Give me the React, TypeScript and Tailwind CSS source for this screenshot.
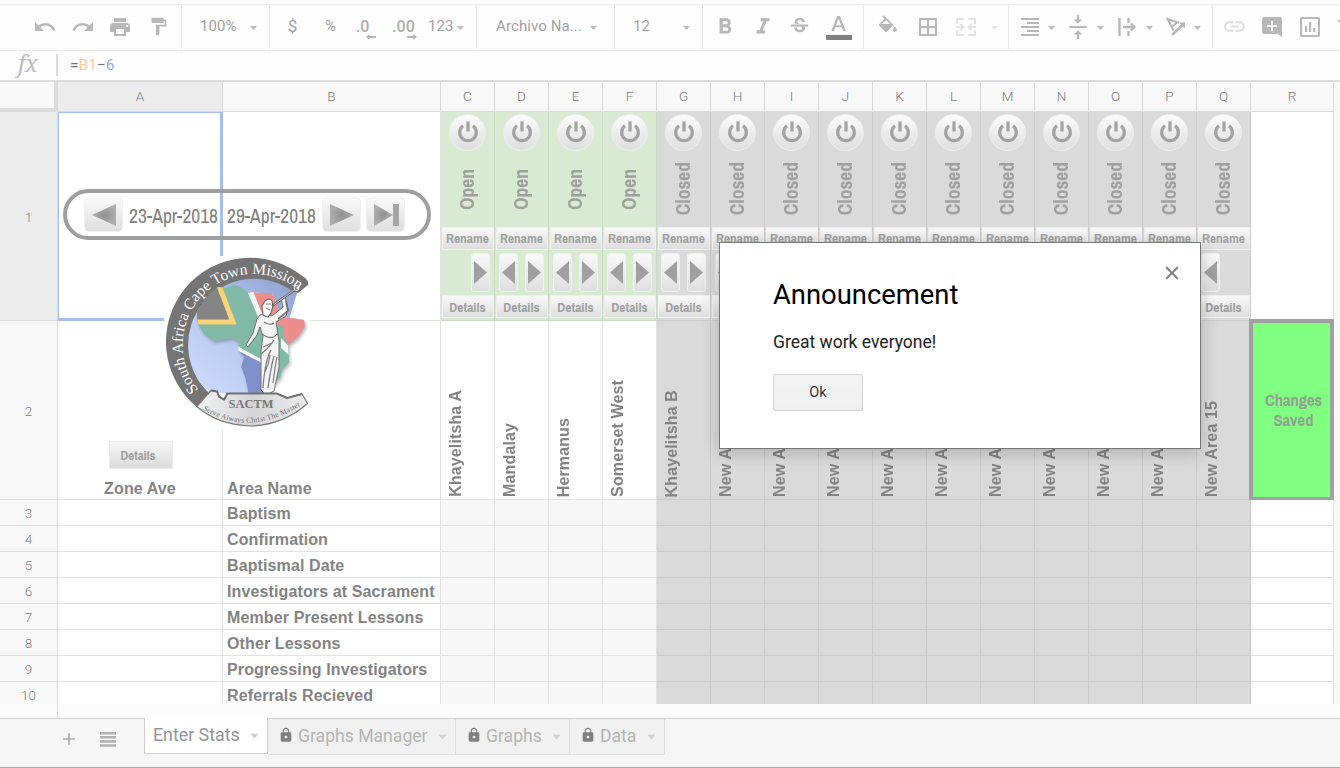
import React from "react";
import {
  MdUndo, MdRedo, MdPrint, MdFormatPaint, MdFormatBold, MdFormatItalic, MdStrikethroughS,
  MdBorderAll, MdFormatAlignRight, MdVerticalAlignCenter, MdLink, MdLock, MdAdd, MdClose,
} from "react-icons/md";

const narrow = "font-['Liberation_Sans_Narrow','Archivo_Narrow','Liberation_Sans',sans-serif]";

const Caret = ({ className = "" }: { className?: string }) => (
  <svg width="7" height="4" viewBox="0 0 7 4" className={`shrink-0 ${className}`}>
    <path d="M0 0h7L3.500 4z" fill="currentColor" />
  </svg>
);

const Slot = ({ className, children }: { className: string; children?: React.ReactNode }) => (
  <div className={`flex h-full shrink-0 items-center justify-center ${className}`}>{children}</div>
);

const Choice = ({ className, text }: { className: string; text: string }) => (
  <div className={`flex h-full shrink-0 items-center justify-between ${className}`}>
    <span>{text}</span>
    <Caret className="mt-[3px] text-[#bcbcbc]" />
  </div>
);

const Divider = () => <div className="h-[44px] w-px shrink-0 self-start bg-[#e8e8e8]" />;

function Decimal({ text, right }: { text: string; right?: boolean }) {
  return (
    <div className="relative text-[16px] font-medium leading-none text-[#adadad]">
      {text}
      <svg width="10" height="6" viewBox="0 0 10 6" className={`absolute top-[15px] ${right ? "-right-[2px] -scale-x-100" : "-right-[7px]"}`}>
        <path d="M0 3l3.500-3v2.100H10v1.800H3.500V6z" fill="#b5b5b5" />
      </svg>
    </div>
  );
}

function Toolbar() {
  return (
    <div className="flex h-[47px] items-center overflow-hidden border-y border-[#ebebeb] bg-[#fefefe] pl-[26px] pb-[2px] text-[15px] tracking-[0.1px] text-[#a2a2a2]">
      <Slot className="w-[38px]"><MdUndo size={24} color="#b8b8b8" /></Slot>
      <Slot className="w-[38px]"><MdRedo size={24} color="#b8b8b8" /></Slot>
      <Slot className="w-[37px] pr-px"><MdPrint size={24} color="#b8b8b8" /></Slot>
      <Slot className="w-[42px] pr-[3px]"><MdFormatPaint size={21} color="#b8b8b8" /></Slot>
      <Divider />
      <Choice className="w-[87px] pl-[18px] pr-[12px]" text="100%" />
      <Divider />
      <Slot className="w-[43px] pl-[2px] text-[17px]">$</Slot>
      <Slot className="w-[32px] pl-[3px]">%</Slot>
      <Slot className="w-[38px] pr-[3px]"><Decimal text=".0" /></Slot>
      <Slot className="w-[38px] pl-[3px]"><Decimal text=".00" right /></Slot>
      <Choice className="w-[55px] pl-[7px] pr-[12px]" text="123" />
      <Divider />
      <Choice className="w-[137px] pl-[19px] pr-[17px]" text="Archivo Na..." />
      <Divider />
      <Choice className="w-[87px] pl-[18px] pr-[12px]" text="12" />
      <Divider />
      <Slot className="w-[41px] pl-[3px]"><MdFormatBold size={26} color="#b8b8b8" /></Slot>
      <Slot className="w-[37px]"><MdFormatItalic size={26} color="#b8b8b8" /></Slot>
      <Slot className="w-[37px]"><MdStrikethroughS size={23} color="#b8b8b8" /></Slot>
      <Slot className="w-[45px] pr-[3px]">
        <svg width="26" height="28" viewBox="0 0 26 28">
          <path d="M11.200 3h2.800l5.800 15h-2.700l-1.300-3.700H9.300L8 18H5.300zM12.600 5.800l-2.500 6.400h5z" fill="#b8b8b8" />
          <rect y="22" width="26" height="5" fill="#808080" />
        </svg>
      </Slot>
      <Divider />
      <Slot className="w-[44px] pb-[6px] pl-[3px]">
        <svg width="18" height="17" viewBox="3 0 18 17">
          <path fillRule="evenodd" d="M16.560 8.940L7.620 0 6.210 1.410l2.380 2.380-5.150 5.150a1.490 1.490 0 0 0 0 2.120l5.500 5.500a1.490 1.490 0 0 0 2.120 0l5.500-5.500a1.490 1.490 0 0 0 0-2.120zM5.500 9L10 5.210 14.500 9zM19 11.500s-2 2.170-2 3.500a2 2 0 0 0 4 0c0-1.330-2-3.500-2-3.500z" fill="#b8b8b8" />
        </svg>
      </Slot>
      <Slot className="w-[40px]"><MdBorderAll size={24} color="#b8b8b8" /></Slot>
      <Slot className="w-[37px] pr-[2px]">
        <svg width="20" height="18" viewBox="0 0 20 18" fill="none" stroke="#e2e2e2" strokeWidth="2">
          <path d="M1 6V1h7M12 1h7v5M1 12v5h7M12 17h7v-5M0 9h7M4.500 6l3 3-3 3M20 9h-7M15.500 6l-3 3 3 3" />
        </svg>
      </Slot>
      <Slot className="w-[23px] pr-[4px]"><Caret className="mt-[3px] text-[#e6e6e6]" /></Slot>
      <Divider />
      <Slot className="w-[38px] pl-[4px]"><MdFormatAlignRight size={24} color="#b8b8b8" /></Slot>
      <Slot className="w-[8px]"><Caret className="mt-[3px] text-[#bcbcbc]" /></Slot>
      <Slot className="w-[41px] pl-[5px]"><MdVerticalAlignCenter size={26} color="#b8b8b8" /></Slot>
      <Slot className="w-[8px]"><Caret className="mt-[3px] text-[#bcbcbc]" /></Slot>
      <Slot className="w-[41px] pl-[5px]">
        <svg width="18" height="18" viewBox="0 0 18 18" fill="none" stroke="#b8b8b8" strokeWidth="2.400">
          <path d="M1.500 0v18M10.500 0v5M10.500 13v5M5 9h11M13 5.500L16.500 9 13 12.500" />
        </svg>
      </Slot>
      <Slot className="w-[8px]"><Caret className="mt-[3px] text-[#bcbcbc]" /></Slot>
      <Slot className="w-[40px] pl-[5px]">
        <svg width="20" height="19" viewBox="0 0 20 19" fill="none" stroke="#b8b8b8" strokeWidth="2">
          <path d="M7.500 13.500L1.500 2 13 5.800M5 10.500L11 5.500" />
          <path d="M6 18L17 7.500" strokeWidth="2.600" />
          <path d="M13 5.500h6v6z" fill="#b8b8b8" stroke="none" />
        </svg>
      </Slot>
      <Slot className="w-[8px]"><Caret className="mt-[3px] text-[#bcbcbc]" /></Slot>
      <div className="grow" />
      <Divider />
      <Slot className="w-[42px]"><MdLink size={25} color="#dfdfdf" /></Slot>
      <Slot className="w-[34px]">
        <svg width="20" height="20" viewBox="0 0 20 20">
          <path fillRule="evenodd" d="M2 0h16a2 2 0 0 1 2 2v18l-4-3H2a2 2 0 0 1-2-2V2a2 2 0 0 1 2-2zM9 4v4H5v2h4v4h2v-4h4V8h-4V4z" fill="#b8b8b8" />
        </svg>
      </Slot>
      <Slot className="w-[42px]">
        <svg width="20" height="20" viewBox="0 0 20 20">
          <rect x="1" y="1" width="18" height="18" rx="1" fill="none" stroke="#b8b8b8" strokeWidth="2.200" />
          <path d="M5 9h2.200v6H5zM9 5h2.200v10H9zM13 11h2.200v4H13z" fill="#b8b8b8" />
        </svg>
      </Slot>
      <Slot className="w-[9px] justify-end">
        <svg width="2" height="16" viewBox="0 0 2 16"><path d="M0 1h2v3L0 2z" fill="#b8b8b8" /></svg>
      </Slot>
    </div>
  );
}

const letters = "CDEFGHIJKLMNOPQ".split("");
const names = ["Khayelitsha A", "Mandalay", "Hermanus", "Somerset West", "Khayelitsha B",
  ...Array.from({ length: 10 }, (_, i) => `New Area ${i + 6}`)];
const dataRows = ["Baptism", "Confirmation", "Baptismal Date", "Investigators at Sacrament",
  "Member Present Lessons", "Other Lessons", "Progressing Investigators", "Referrals Recieved"];

const shine = "border border-[#f0f0f0] bg-linear-to-b from-[#f9f9f9] to-[#dfdfdf]";

const Tri = ({ left }: { left?: boolean }) => (
  <svg width="13" height="23" viewBox="0 0 13 23" className={left ? "-scale-x-100" : ""}>
    <path d="M0 0l13 11.500L0 23z" fill="#a0a0a0" />
  </svg>
);

function ControlCell({ i }: { i: number }) {
  const open = i < 4;
  return (
    <div className={`flex h-[209px] w-[54px] shrink-0 flex-col items-center border-b border-r pt-[2px] ${open ? "border-[#c9d9c4] bg-[#d9ead3]" : "border-[#cbcbcb] bg-[#dadada]"}`}>
      <div className="flex size-[37px] shrink-0 items-center justify-center rounded-full border border-[#eeeeee] bg-linear-to-b from-[#fcfcfc] to-[#dedede] pb-px">
        <svg width="22" height="24" viewBox="0 0 22 24" fill="none" stroke="#a2a2a2" strokeWidth="3.200">
          <path d="M6 5.800a8.300 8.300 0 1 0 10 0" />
          <path d="M11 1.500v10" />
        </svg>
      </div>
      <div className="flex h-[76px] shrink-0 items-center justify-center pl-px">
        <div className={`rotate-180 text-[19.500px] font-bold leading-none text-[#9f9f9f] [writing-mode:vertical-rl] ${narrow}`}>{open ? "Open" : "Closed"}</div>
      </div>
      <div className={`flex h-[23px] w-[52px] shrink-0 items-center justify-center text-[13.500px] font-bold text-[#a0a0a0] ${narrow} ${shine}`}>Rename</div>
      <div className="flex h-[45px] w-full shrink-0 items-center justify-between px-[4px]">
        {i > 0 ? <div className={`flex h-[39px] w-[19px] items-center justify-center rounded-[3px] ${shine}`}><Tri left /></div> : <span />}
        {i < 14 ? <div className={`flex h-[39px] w-[19px] items-center justify-center rounded-[3px] ${shine}`}><Tri /></div> : <span />}
      </div>
      <div className={`flex h-[23px] w-[52px] shrink-0 items-center justify-center pt-px text-[13.500px] font-bold text-[#a0a0a0] ${narrow} ${shine}`}>Details</div>
    </div>
  );
}

function Logo() {
  return (
    <svg width="147" height="174" viewBox="164 256 147 174" className="block bg-white">
      <defs>
        <linearGradient id="sky" x1="1" y1="0" x2="0.200" y2="1">
          <stop offset="0" stopColor="#8b9fd0" /><stop offset="0.500" stopColor="#b3c5ea" /><stop offset="1" stopColor="#cbdafa" />
        </linearGradient>
        <linearGradient id="plate" x1="0" y1="0" x2="1" y2="0">
          <stop offset="0" stopColor="#f3f3f3" /><stop offset="0.500" stopColor="#d5d5d5" /><stop offset="1" stopColor="#ececec" />
        </linearGradient>
        <filter id="soft" x="-20%" y="-20%" width="150%" height="150%"><feGaussianBlur stdDeviation="1.500" /></filter>
        <clipPath id="africa"><path d="M196.700 311.700L205 300l4-5 9-8 8 1 8-3 8 3 5 5 6-1 8 1 11 0 3 6 3 9 7 9 19 3 1 6-7 11-10 8 1 17-7 8-2 7-13 15-8 4-10 0-4-19-4-10 3-10-6-7 1-8-7-4-18 3-10-7-6-10z" /></clipPath>
        <path id="arcTop" d="M199.100 390.400A71 71 0 0 1 301.500 292.500" />
        <path id="arcLow" d="M200 408Q251 440 306 402" />
      </defs>
      <path d="M210 393A66 66 0 0 1 297 293L286 330L272 393z" fill="url(#sky)" />
      <path d="M197 407A84 84 0 0 1 303 276.500Q309 280 308 285L298 293L293 291.500A66 66 0 0 0 209 393z" fill="#747474" />
      <path transform="translate(1.500 2.500)" filter="url(#soft)" opacity="0.450" fill="#667" d="M196.700 311.700L205 300l4-5 9-8 8 1 8-3 8 3 5 5 6-1 8 1 11 0 3 6 3 9 7 9 19 3 1 6-7 11-10 8 1 17-7 8-2 7-13 15-8 4-10 0-4-19-4-10 3-10-6-7 1-8-7-4-18 3-10-7-6-10z" />
      <g clipPath="url(#africa)">
        <path d="M190 280h120v120H190z" fill="#80b9a5" />
        <path d="M190 284h28l12 38H190z" fill="#858585" />
        <path d="M216 278l17 44h-42" fill="none" stroke="#fad478" strokeWidth="5" />
        <path d="M246 288l19 46 30 0 16-30V280z" fill="#f7f8f7" />
        <path d="M251 286l16 40 16 10 14 20 18-20V280z" fill="#ed8e8e" />
        <path d="M284 325l0 20 14 14-8 20h-24v-50z" fill="#80b9a5" />
        <path d="M281 338l13 14-3 5-10-9z" fill="#f7f8f7" />
        <path d="M234 344l32 18 4 40h-44z" fill="#f7f8f7" />
        <path d="M235 349l27 14 5 40h-38z" fill="#7f90cd" />
      </g>
      <path d="M260 315L257 319l-4 14-7 12 2 2 9-12 3-8 3 9-2 15 0 39 5 5 8-4 5-24 0-26-3-19 10-6 2-7-3-12-4 1 2 9-11 9-5-2z" fill="#f4f4f4" stroke="#707070" strokeWidth="1" />
      <path d="M262 334q10 7 15 0M261 354q8-6 13-14M263 388q2-28 8-38M268 388q3-22 6-32M273 383q2-16 4-26M264 322q6 4 10 1M265 372q4-8 5-17M263 347l9-4" fill="none" stroke="#7a7a7a" strokeWidth="1.200" />
      <path d="M286 301l2 10-10 8" fill="none" stroke="#747474" strokeWidth="1.800" />
      <path d="M265 301q4-4 7 0l1 5-2 7-3 4-5-2-1-9z" fill="#fafafa" stroke="#6f6f6f" strokeWidth="1.200" />
      <path d="M266 304l5 0M266 308l4 2" stroke="#808080" strokeWidth="1" />
      <path d="M272 306l24-17" stroke="#666" strokeWidth="2.200" />
      <path d="M274 304.500l21-15" stroke="#eee" strokeWidth="0.700" />
      <circle cx="296.500" cy="288" r="2.500" fill="#8a8a8a" stroke="#ddd" strokeWidth="1" />
      <path d="M196.700 406.500L211 390.500l6 1 2 5 5 3 3.500-6h49.500l10 4.500 15-4 5.500 9.500Q283 425 251 426Q218 425 196.700 406.500z" fill="url(#plate)" stroke="#777" strokeWidth="1.200" />
      <path d="M211 390.500l6 1 2 5 5 3 3.500-6h49.500l10 4.500 15-4" fill="none" stroke="#707070" strokeWidth="2" />
      <text fontFamily="'Liberation Serif',serif" fontSize="15.500" fill="#fff" textLength="208" lengthAdjust="spacing"><textPath href="#arcTop" startOffset="1">South Africa Cape Town Mission</textPath></text>
      <text x="251" y="408" textAnchor="middle" fontFamily="'Liberation Serif',serif" fontSize="13" fontWeight="bold" fill="#777" textLength="45" lengthAdjust="spacingAndGlyphs">SACTM</text>
      <text fontFamily="'Liberation Serif',serif" fontSize="7.500" fill="#707070" textLength="104" lengthAdjust="spacing"><textPath href="#arcLow" startOffset="3">Serve Always Christ The Master</textPath></text>
    </svg>
  );
}

function NavButton({ end, left }: { end?: boolean; left?: boolean }) {
  return (
    <div className={`flex h-[35px] w-[39px] items-center justify-center rounded-[5px] ${shine}`}>
      <svg width="26" height="24" viewBox="0 0 26 24" className={left ? "-scale-x-100" : ""}>
        <defs><radialGradient id="navshade"><stop offset="0" stopColor="#929292" /><stop offset="1" stopColor="#adadad" /></radialGradient></defs>
        {end ? <><path d="M1 1l19 11L1 23z" fill="url(#navshade)" /><rect x="20" y="1" width="6" height="22" fill="#a5a5a5" /></>
          : <path d="M1 1l24 11L1 23z" fill="url(#navshade)" />}
      </svg>
    </div>
  );
}

const head = "flex h-[30px] shrink-0 items-center justify-center border-b border-r border-[#d9d9d9] text-[13.500px] font-light text-[#7c7c7c]";
const rowNo = "flex w-[58px] shrink-0 items-center justify-center border-b border-r border-[#dcdcdc] pt-[2px] text-[13.500px] font-light text-[#828282]";
const bold = "font-['Liberation_Sans',Arial,sans-serif] text-[16px] font-bold tracking-[0.12px] text-[#838383]";

function Sheet() {
  return (
    <div className="relative h-[622px] overflow-hidden bg-[#f8f8f8]">
      <div className="flex">
        <div className="h-[30px] w-[58px] shrink-0 border-b-[4px] border-r-[4px] border-[#dcdcdc] bg-[#f8f8f8]" />
        <div className={`${head} w-[165px] bg-[#ececec]`}>A</div>
        <div className={`${head} w-[218px]`}>B</div>
        {letters.map((l) => <div key={l} className={`${head} w-[54px]`}>{l}</div>)}
        <div className={`${head} w-[83px]`}>R</div>
      </div>
      <div className="flex h-[209px]">
        <div className={`${rowNo} bg-[#ececec]`}>1</div>
        <div className={`flex w-[165px] shrink-0 items-center justify-end border-b-[3px] border-l border-r-[3px] border-t border-[#a2bff0] bg-white pr-[2px] pt-[2px] text-[19.500px] text-[#808080] ${narrow}`}>23-Apr-2018</div>
        <div className={`flex w-[218px] shrink-0 items-center border-b border-r border-[#e2e2e2] bg-white pl-[4px] pt-px text-[19.500px] text-[#808080] ${narrow}`}>29-Apr-2018</div>
        {letters.map((l, i) => <ControlCell key={l} i={i} />)}
        <div className="w-[83px] shrink-0 border-r border-[#e2e2e2] bg-white" />
      </div>
      <div className="flex h-[179px]">
        <div className={rowNo}>2</div>
        <div className="flex w-[165px] shrink-0 flex-col items-center justify-end border-b border-r border-[#e2e2e2] bg-white">
          <div className={`mb-[9px] ml-[2px] flex h-[28px] w-[64px] items-center justify-center border border-[#ececec] bg-linear-to-b from-[#f6f6f6] to-[#dcdcdc] pr-[6px] pt-px text-[13px] font-bold text-[#a0a0a0] ${narrow}`}>Details</div>
          <div className={`${bold} leading-[21px]`}>Zone Ave</div>
        </div>
        <div className={`${bold} flex w-[218px] shrink-0 items-end border-b border-r border-[#e2e2e2] bg-white pl-[4px] leading-[21px]`}>Area Name</div>
        {names.map((n, i) => (
          <div key={n} className={`flex w-[54px] shrink-0 items-end border-b border-r pb-[2px] pl-[5px] ${i < 4 ? "border-[#e2e2e2] bg-white" : "border-[#cbcbcb] bg-[#dadada]"}`}>
            <div className={`${bold} rotate-180 whitespace-nowrap leading-[20px] [writing-mode:vertical-rl]`}>{n}</div>
          </div>
        ))}
        <div className={`-ml-[2px] -mt-[2px] flex h-[182px] w-[85px] shrink-0 items-center justify-center border-[4px] border-[#a0a0a0] bg-[#80ff80] pl-[4px] text-center text-[16.500px] font-bold leading-[20px] text-[#909f90] ${narrow}`}>Changes<br />Saved</div>
      </div>
      {dataRows.map((r, k) => (
        <div key={r} className="flex h-[26px]">
          <div className={rowNo}>{k + 3}</div>
          <div className="w-[165px] shrink-0 border-b border-r border-[#e2e2e2] bg-white" />
          <div className={`${bold} flex w-[218px] shrink-0 items-center whitespace-nowrap border-b border-r border-[#e2e2e2] bg-white pl-[4px] pt-[2px]`}>{r}</div>
          {letters.map((l, i) => <div key={l} className={`w-[54px] shrink-0 border-b border-r ${i < 4 ? "border-[#e2e2e2] bg-[#f7f7f7]" : "border-[#cbcbcb] bg-[#dadada]"}`} />)}
          <div className="w-[83px] shrink-0 border-b border-r border-[#e2e2e2] bg-white" />
        </div>
      ))}
      <div className="absolute left-[164px] top-[174px]"><Logo /></div>
      <div className="absolute left-[63px] top-[107px] flex h-[51px] w-[368px] items-center rounded-full border-[4px] border-[#9f9f9f] pl-[17px]">
        <NavButton left />
        <div className="w-[199px]" />
        <NavButton />
        <div className="w-[5px]" />
        <NavButton end />
      </div>
    </div>
  );
}

function Tab({ className, label }: { className: string; label: string }) {
  return (
    <div className={`flex h-[36px] shrink-0 items-center border-b border-r border-[#dfdfdf] bg-[#f1f1f1] pl-[10px] text-[17.600px] text-[#b4b4b4] ${className}`}>
      <MdLock size={16} color="#808080" className="mb-[3px] mr-[4px]" />
      {label}
      <Caret className="ml-auto mr-[9px] scale-125 text-[#cfcfcf]" />
    </div>
  );
}

function Footer() {
  return (
    <div className="flex h-[50px] items-start border-b border-t border-b-[#acacac] border-t-[#cfcfcf] bg-[#f6f6f6]">
      <div className="flex h-[40px] w-[144px] shrink-0 items-center pl-[59px]">
        <MdAdd size={20} color="#a9a9a9" />
        <svg width="16" height="15" viewBox="0 0 16 15" className="ml-[21px]"><path d="M0 0h16v2.500H0zM0 4.100h16v2.500H0zM0 8.200h16v2.500H0zM0 12.300h16v2.500H0z" fill="#b0b0b0" /></svg>
      </div>
      <div className="-mt-px flex h-[36px] w-[124px] shrink-0 items-center border-x border-b border-[#cfcfcf] bg-white pl-[8px] text-[17.800px] text-[#949494]">
        Enter Stats<Caret className="ml-auto mr-[9px] scale-125 text-[#cfcfcf]" />
      </div>
      <Tab className="w-[188px]" label="Graphs Manager" />
      <Tab className="w-[114px]" label="Graphs" />
      <Tab className="w-[95px]" label="Data" />
    </div>
  );
}

export default function App() {
  return (
    <div className="relative flex h-[768px] w-[1340px] flex-col overflow-hidden bg-[#fefefe] font-[Roboto,sans-serif]">
      <div className="h-[4px] shrink-0" />
      <Toolbar />
      <div className="flex h-[31px] shrink-0 items-start border-b-2 border-[#dcdcdc]">
        <div className="w-[56px] pl-[18px] font-['Noto_Serif','Liberation_Serif',serif] text-[23px] italic leading-[24px] text-[#bcbcbc]">fx</div>
        <div className="mt-[3px] h-[22px] w-[2px] bg-[#dadada]" />
        <div className="pl-[12px] text-[15.500px] leading-[28px] text-[#707070]">=<span className="text-[#fbcb92]">B1</span>−<span className="text-[#94afe8]">6</span></div>
      </div>
      <Sheet />
      <div className="flex h-[14px] shrink-0 bg-[#fcfcfc]"><div className="w-[58px] border-r border-[#e2e2e2]" /></div>
      <Footer />
      <div className="absolute left-[719px] top-[242px] h-[207px] w-[482px] border border-[#777] bg-white pl-[53px] pt-[34px] shadow-[0_4px_16px_rgba(0,0,0,0.2)]">
        <h1 className="text-[27.400px] leading-[36px] text-black">Announcement</h1>
        <p className="mt-[17px] text-[17.500px] leading-[24px] text-[#222]">Great work everyone!</p>
        <button className="mt-[20px] block h-[37px] w-[90px] rounded-[2px] border border-[#d4d4d4] bg-linear-to-b from-[#f5f5f5] to-[#f0f0f0] text-[14.500px] text-[#333]">Ok</button>
        <MdClose size={22} color="#777" className="absolute right-[17px] top-[19px]" />
      </div>
    </div>
  );
}
